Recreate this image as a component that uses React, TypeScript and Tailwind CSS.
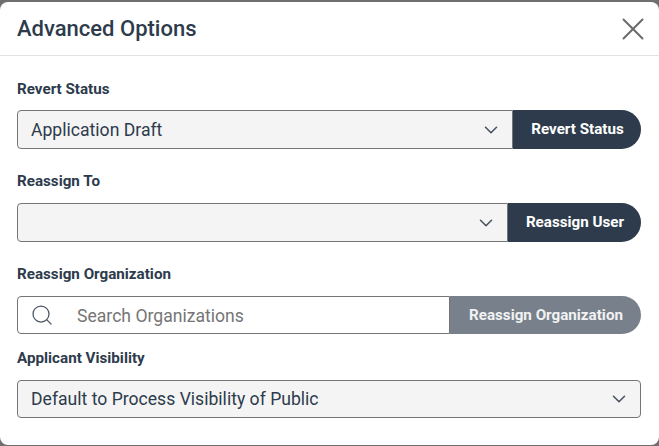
import { ChevronDown, Search, X } from 'lucide-react'

const font = { fontFamily: 'Roboto, sans-serif' }

function FieldLabel({ children, className }: { children: string; className: string }) {
  return <label className={`block text-[15.2px] leading-[18px] font-bold text-[#2d3b4c] ${className}`}>{children}</label>
}

function SelectBox({ value, className, textClassName = 'pt-[2px]' }: { value?: string; className: string; textClassName?: string }) {
  return (
    <div className={`flex items-center justify-between border border-[#757575] bg-[#f4f4f4] pl-[13px] text-[17.6px] text-[#2d3b4c] ${className}`}>
      <span className={textClassName}>{value}</span>
      <ChevronDown size={22} strokeWidth={1.75} className="text-[#4b5563]" />
    </div>
  )
}

function PillButton({ children, className }: { children: string; className: string }) {
  return (
    <button className={`h-full rounded-r-[20px] pl-px text-[15.2px] font-bold ${className}`}>
      {children}
    </button>
  )
}

export default function App() {
  return (
    <div className="h-[446px] w-[659px] overflow-hidden bg-[#6f6f6f] pt-[2px]" style={font}>
      <div className="h-[443px] rounded-[8px] bg-white">
        <div className="flex h-[54px] items-center justify-between border-b border-[#e2e2e2] pl-[17px] pr-[7px]">
          <h1 className="text-[22px] font-medium text-[#2d3b4c]">Advanced Options</h1>
          <X size={38} strokeWidth={1.25} className="text-[#6b6b6b]" />
        </div>

        <div className="pl-[17px] pr-[18px]">
          <FieldLabel className="mt-[24px] mb-[12px]">Revert Status</FieldLabel>
          <div className="flex h-[39px]">
            <SelectBox value="Application Draft" className="flex-1 rounded-l-[4px] pr-[10px]" />
            <PillButton className="w-[128px] bg-[#2d3b4c] text-white">Revert Status</PillButton>
          </div>

          <FieldLabel className="mt-[23px] mb-[13px]">Reassign To</FieldLabel>
          <div className="flex h-[39px]">
            <SelectBox className="flex-1 rounded-l-[4px] pr-[10px]" />
            <PillButton className="w-[133px] bg-[#2d3b4c] text-white">Reassign User</PillButton>
          </div>

          <FieldLabel className="mt-[23px] mb-[13px]">Reassign Organization</FieldLabel>
          <div className="flex h-[38px]">
            <div className="flex flex-1 items-center rounded-l-[4px] border border-[#757575] bg-white pl-[12px] text-[17.6px] text-[#757575]">
              <Search size={24} strokeWidth={1.25} className="mr-[23px] text-[#4b5563]" />
              <span className="pt-[2px]">Search Organizations</span>
            </div>
            <PillButton className="w-[191px] bg-[#78808b] text-[#f1f2f3]">Reassign Organization</PillButton>
          </div>

          <FieldLabel className="mt-[15px] mb-[13px]">Applicant Visibility</FieldLabel>
          <SelectBox value="Default to Process Visibility of Public" textClassName="" className="h-[38px] rounded-[4px] pr-[10px]" />
        </div>
      </div>
    </div>
  )
}
